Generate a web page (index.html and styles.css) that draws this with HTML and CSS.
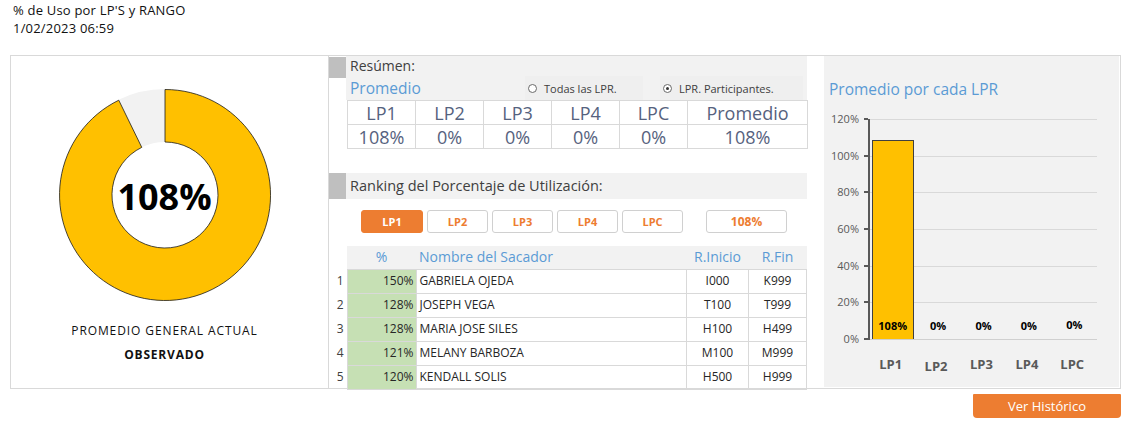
FILE: index.html
```html
<!DOCTYPE html>
<html lang="es">
<head>
<meta charset="utf-8">
<title>% de Uso por LP'S y RANGO</title>
<link rel="stylesheet" href="styles.css">
</head>
<body>
<header class="page-head">
  <div class="page-title">% de Uso por LP'S y RANGO</div>
  <div class="page-date">1/02/2023 06:59</div>
</header>

<main class="board">
  <section class="gauge">
    <div class="donut">
      <svg width="212" height="212" viewBox="0 0 212 212">
        <path d="M59.53,10.73 A106,106 0 0,1 106,0 L106,53 A53,53 0 0,0 82.76,58.36 Z" fill="#f2f2f2"/>
        <path d="M106,0.5 A105.5,105.5 0 1,1 59.75,11.2 L82.76,58.36 A53,53 0 1,0 106,53 Z" fill="#ffc000" stroke="#1a1a1a" stroke-width="0.8"/>
      </svg>
      <div class="donut-value">108%</div>
    </div>
    <div class="gauge-label">PROMEDIO GENERAL ACTUAL</div>
    <div class="gauge-status">OBSERVADO</div>
  </section>

  <section class="summary">
    <div class="sec-head sec-head-tall">
      <div class="marker"></div>
      <div class="sec-body">
        <div class="sec-title">Resúmen:</div>
        <div class="sec-row">
          <span class="sec-sub">Promedio</span>
          <label class="radio radio-a"><span class="dot"></span>Todas las LPR.</label>
          <label class="radio radio-b"><span class="dot dot-on"></span>LPR. Participantes.</label>
        </div>
      </div>
    </div>

    <table class="avg-table">
      <tr><td class="c1">LP1</td><td class="c1">LP2</td><td class="c1">LP3</td><td class="c1">LP4</td><td class="c1">LPC</td><td class="c2">Promedio</td></tr>
      <tr><td>108%</td><td>0%</td><td>0%</td><td>0%</td><td>0%</td><td>108%</td></tr>
    </table>

    <div class="sec-head sec-head-rank">
      <div class="marker marker-rank"></div>
      <div class="sec-body sec-body-rank">
        <div class="sec-title">Ranking del Porcentaje de Utilización:</div>
      </div>
    </div>

    <div class="tabs">
      <span class="tab tab-on">LP1</span>
      <span class="tab">LP2</span>
      <span class="tab">LP3</span>
      <span class="tab">LP4</span>
      <span class="tab">LPC</span>
      <span class="tab tab-total">108%</span>
    </div>

    <table class="rank">
      <tr class="rank-head"><td class="n"></td><td class="pct-h">%</td><td class="name">Nombre del Sacador</td><td class="ctr">R.Inicio</td><td class="ctr">R.Fin</td></tr>
      <tr><td class="n">1</td><td class="pct">150%</td><td class="name">GABRIELA OJEDA</td><td class="ctr">I000</td><td class="ctr">K999</td></tr>
      <tr><td class="n">2</td><td class="pct">128%</td><td class="name">JOSEPH VEGA</td><td class="ctr">T100</td><td class="ctr">T999</td></tr>
      <tr><td class="n">3</td><td class="pct">128%</td><td class="name">MARIA JOSE SILES</td><td class="ctr">H100</td><td class="ctr">H499</td></tr>
      <tr><td class="n">4</td><td class="pct">121%</td><td class="name">MELANY BARBOZA</td><td class="ctr">M100</td><td class="ctr">M999</td></tr>
      <tr><td class="n">5</td><td class="pct">120%</td><td class="name">KENDALL SOLIS</td><td class="ctr">H500</td><td class="ctr">H999</td></tr>
    </table>
  </section>

  <section class="chart-panel">
    <div class="chart-title">Promedio por cada LPR</div>
    <div class="chart">
      <div class="y-labels">
        <span>120%</span><span>100%</span><span>80%</span><span>60%</span><span>40%</span><span>20%</span><span>0%</span>
      </div>
      <div class="plot-wrap">
        <div class="ticks">
          <i></i><i></i><i></i><i></i><i></i><i></i><i></i>
        </div>
        <div class="plot">
          <div class="grid"><i></i><i></i><i></i><i></i><i></i><i></i></div>
          <div class="bars">
            <div class="cat"><div class="bar" style="height:199px"></div><span class="val">108%</span></div>
            <div class="cat"><span class="val">0%</span></div>
            <div class="cat"><span class="val">0%</span></div>
            <div class="cat"><span class="val">0%</span></div>
            <div class="cat"><span class="val val-up">0%</span></div>
          </div>
        </div>
        <div class="x-labels">
          <span>LP1</span><span class="lo">LP2</span><span>LP3</span><span>LP4</span><span>LPC</span>
        </div>
      </div>
    </div>
  </section>
</main>

<div class="actions">
  <button class="btn-hist">Ver Histórico</button>
</div>
</body>
</html>
```

FILE: styles.css
```css
* { box-sizing: border-box; }
body {
  margin: 0;
  font-family: "Open Sans", "DejaVu Sans", sans-serif;
  color: #262626;
  background: #fff;
}
.page-head {
  padding: 1px 13px 0;
  font-size: 13px;
  letter-spacing: 0.2px;
  line-height: 18px;
  color: #111;
}
.board {
  margin: 18px 0 0 10px;
  width: 1111px;
  height: 334px;
  border: 1px solid #d9d9d9;
  display: flex;
}

/* gauge */
.gauge {
  width: 317px;
  display: flex;
  flex-direction: column;
  align-items: center;
  padding-top: 33px;
  padding-right: 10px;
}
.donut {
  width: 212px;
  height: 212px;
  position: relative;
}
.donut svg { display: block; }
.donut-value {
  position: absolute;
  inset: 0;
  display: flex;
  align-items: center;
  justify-content: center;
  font-size: 36px;
  font-weight: 700;
  color: #000;
  padding-top: 2px;
}
.gauge-label {
  margin-top: 21px;
  font-size: 12px;
  letter-spacing: 0.9px;
  line-height: 18px;
  color: #111;
}
.gauge-status {
  margin-top: 6px;
  font-size: 12px;
  letter-spacing: 0.8px;
  line-height: 18px;
  font-weight: 700;
  color: #111;
}

/* summary */
.summary {
  width: 480px;
  border-left: 1px solid #d9d9d9;
  display: flex;
  flex-direction: column;
}
.sec-head {
  display: flex;
  margin-right: 1px;
}
.marker {
  width: 17px;
  height: 21px;
  background: #bfbfbf;
  margin-top: 1px;
}
.marker-rank { height: 26px; margin-top: 0; }
.sec-body {
  flex: 1;
  background: #f2f2f2;
  height: 44px;
  padding-left: 4px;
}
.sec-body-rank { height: 26px; }
.sec-title {
  font-size: 14px;
  line-height: 20px;
  color: #404040;
}
.sec-body-rank .sec-title {
  line-height: 26px;
  font-size: 14.5px;
}
.sec-row {
  display: flex;
  align-items: center;
  height: 24px;
}
.sec-sub {
  font-size: 15.5px;
  color: #5b9bd5;
  width: 175px;
}
.radio {
  display: flex;
  align-items: center;
  height: 24px;
  font-size: 11px;
  color: #404040;
  background: #efefef;
}
.radio-a { width: 118px; padding-left: 3px; }
.radio-b { width: 143px; margin-left: 17px; padding-left: 3px; }
.dot {
  width: 9px;
  height: 9px;
  border-radius: 50%;
  border: 1px solid #6a6a6a;
  background: #fff;
  margin-right: 7px;
  position: relative;
}
.dot-on::after {
  content: "";
  position: absolute;
  left: 2px;
  top: 2px;
  width: 3px;
  height: 3px;
  border-radius: 50%;
  background: #333;
}

.avg-table {
  margin-left: 18px;
  width: 461px;
  border-collapse: collapse;
  color: #56627e;
  font-size: 18px;
}
.avg-table td {
  border: 1px solid #d9d9d9;
  height: 24px;
  padding: 0;
  text-align: center;
  line-height: 22px;
}
.avg-table td.c1 { width: 68px; }
.avg-table td.c2 { width: 120px; }

.sec-head-rank { margin-top: 24px; }

.tabs {
  display: flex;
  gap: 4px;
  margin: 11px 0 0 32px;
}
.tab {
  width: 61px;
  height: 23px;
  border: 1px solid #d0d0d0;
  border-radius: 3px;
  display: flex;
  align-items: center;
  justify-content: center;
  font-size: 11px;
  font-weight: 700;
  color: #ed7d31;
  background: #fff;
}
.tab-on {
  width: 62px;
  background: #ed7d31;
  border-color: #ed7d31;
  color: #fff;
}
.tab-total {
  width: 81px;
  margin-left: 19px;
  font-size: 12px;
}

.rank {
  margin-top: 13px;
  border-collapse: collapse;
  width: 478px;
  font-size: 12px;
  color: #262626;
}
.rank td {
  height: 24px;
  padding: 0;
  border: 1px solid #d9d9d9;
  line-height: 22px;
}
.rank td.n {
  width: 18px;
  border: none;
  text-align: right;
  padding-right: 3px;
  color: #404040;
}
.rank-head td {
  background: #f2f2f2;
  color: #5b9bd5;
  font-size: 14px;
  border: none;
  height: 23px;
}
.rank-head td.n { background: #fff; }
.rank td.pct {
  width: 69px;
  background: #c6e0b4;
  text-align: right;
  padding-right: 2px;
}
.rank td.pct-h { text-align: center; }
.rank td.name { padding-left: 3px; }
.rank td.ctr { text-align: center; width: 62px; }
.rank td.ctr:last-child { width: 58px; }

/* chart */
.chart-panel {
  margin-left: 16px;
  width: 295px;
  background: #f2f2f2;
  padding-top: 23px;
  margin-bottom: 1px;
}
.chart-title {
  padding-left: 5px;
  font-size: 15.5px;
  line-height: 20px;
  color: #5b9bd5;
}
.chart {
  display: flex;
  margin-top: 13px;
}
.y-labels {
  width: 35px;
  display: flex;
  flex-direction: column;
  align-items: flex-end;
  gap: 22.67px;
  font-size: 11px;
  line-height: 14px;
  color: #595959;
}
.plot-wrap {
  margin-left: 5px;
  display: grid;
  grid-template-columns: 4px 229px;
  grid-template-rows: 234px auto;
}
.ticks {
  display: flex;
  flex-direction: column;
  gap: 34.67px;
  padding-top: 6px;
}
.ticks i {
  display: block;
  width: 4px;
  height: 2px;
  background: #595959;
}
.plot {
  position: relative;
  margin-top: 7px;
  height: 221px;
  border-left: 2px solid #595959;
}
.grid {
  display: flex;
  flex-direction: column;
}
.grid i {
  display: block;
  height: 36.67px;
  border-top: 1px solid #d9d9d9;
}
.plot::after {
  content: "";
  position: absolute;
  left: 0;
  right: 0;
  bottom: 0;
  border-top: 1px solid #d0d0d0;
}
.bars {
  position: absolute;
  inset: 0 0 1px 0;
  display: flex;
}
.cat {
  width: 45.4px;
  position: relative;
}
.bar {
  position: absolute;
  left: 2px;
  width: 42px;
  bottom: 0;
  background: #ffc000;
  border: 1px solid #404040;
  border-bottom: none;
}
.val {
  position: absolute;
  left: 0;
  right: 0;
  bottom: 6px;
  text-align: center;
  font-size: 11px;
  line-height: 14px;
  font-weight: 700;
  color: #000;
}
.val-up { bottom: 7px; }
.x-labels {
  grid-column: 2;
  display: flex;
  margin-top: 9px;
}
.x-labels span {
  width: 45.4px;
  text-align: center;
  font-size: 13px;
  font-weight: 700;
  color: #595959;
  line-height: 18px;
}
.x-labels span.lo { padding-top: 2px; }

.actions {
  width: 1121px;
  display: flex;
  justify-content: flex-end;
  margin-top: 5px;
}
.btn-hist {
  width: 148px;
  height: 24px;
  border: none;
  border-radius: 1px 1px 4px 4px;
  background: #ed7d31;
  color: #fff;
  font-family: "Open Sans", "DejaVu Sans", sans-serif;
  font-size: 13px;
  padding: 0;
}
```
